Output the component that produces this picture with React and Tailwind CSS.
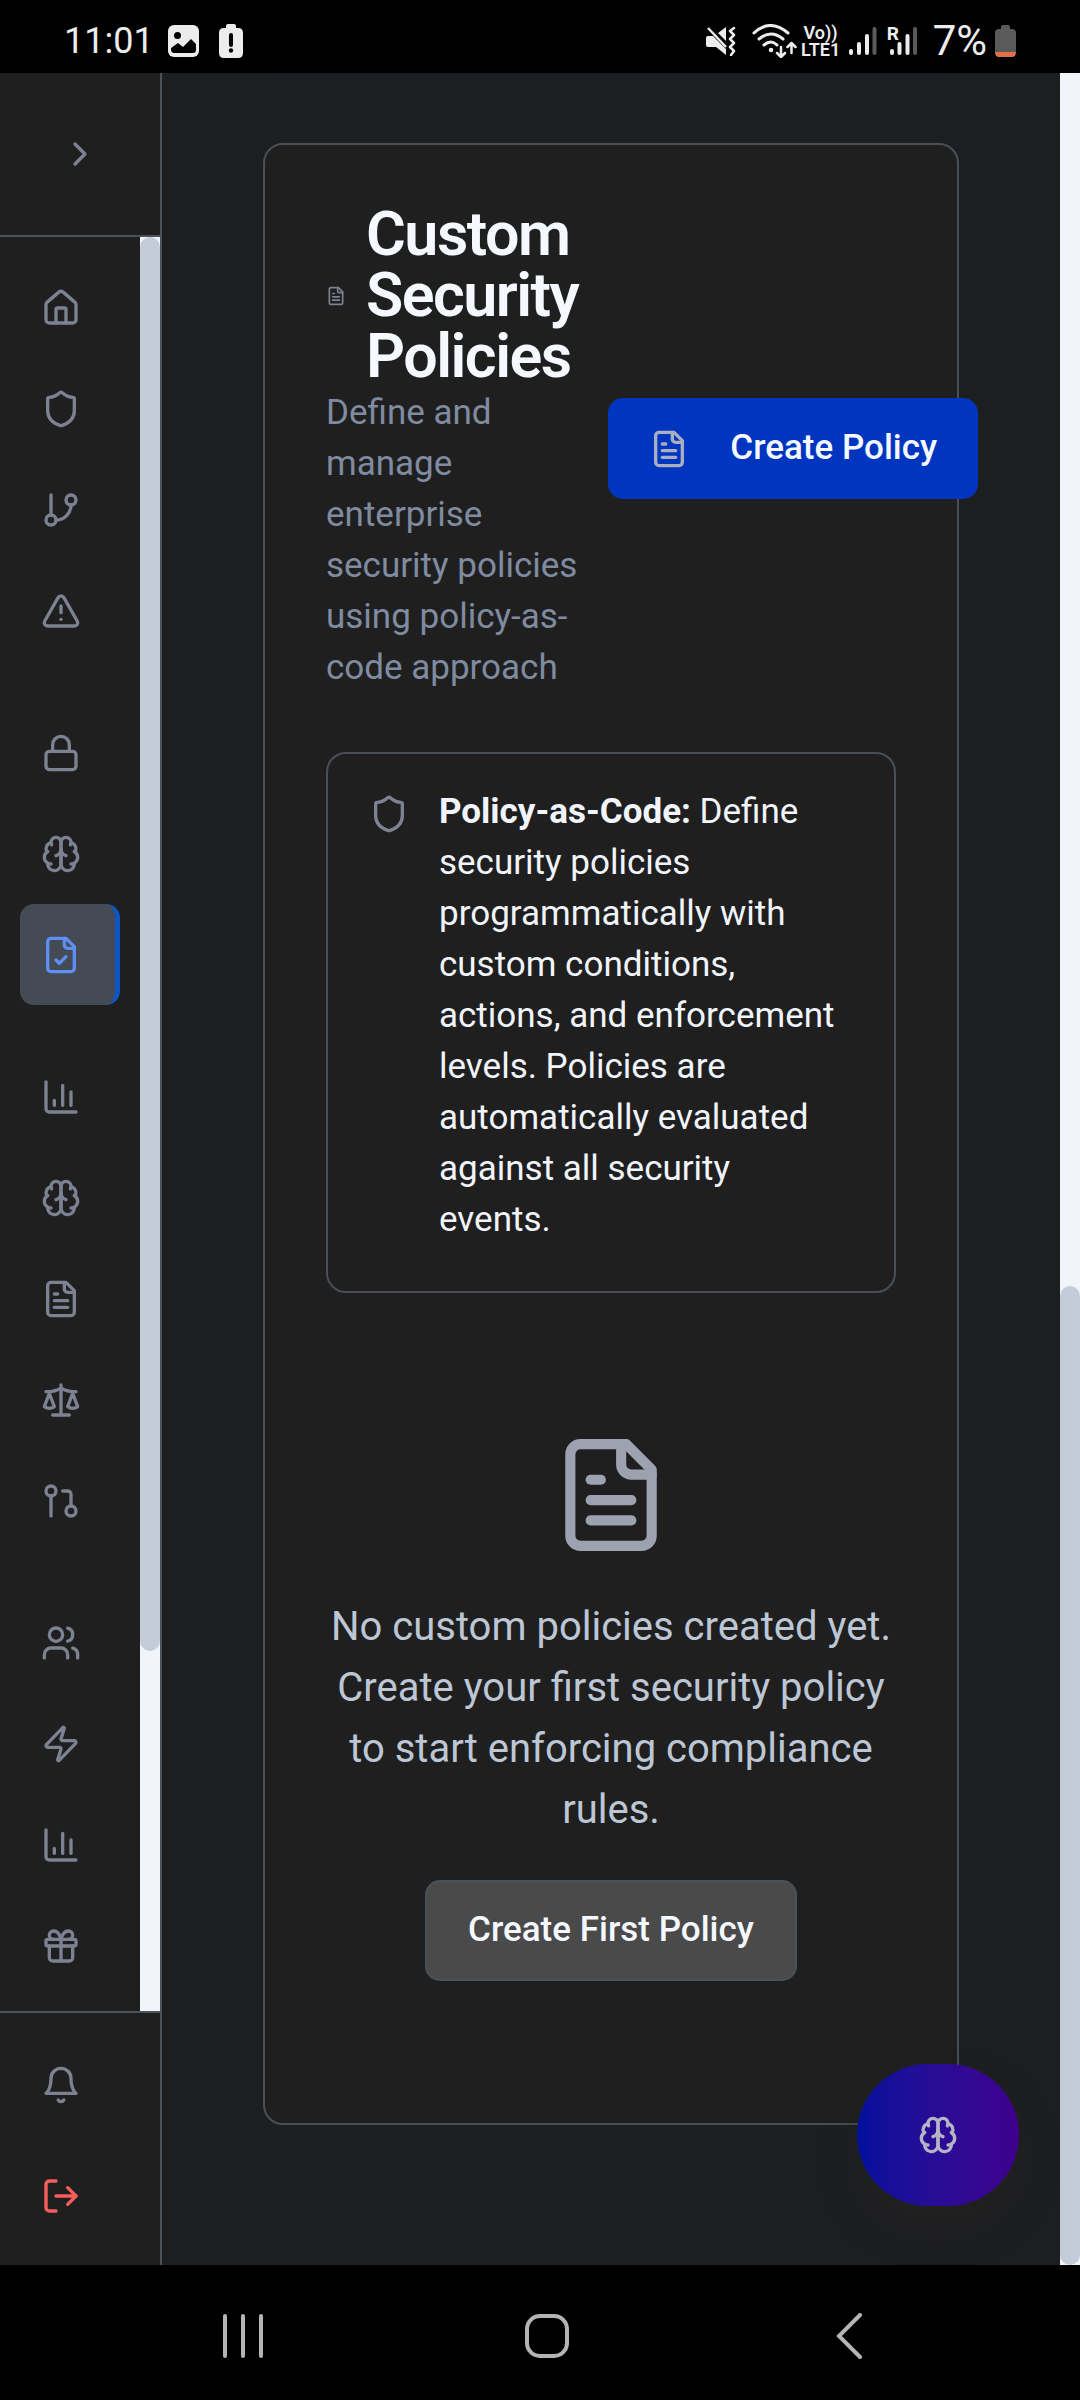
import React from "react";

const glyphs = {
  chevron: <path d="m9 18 6-6-6-6" />,
  home: (
    <>
      <path d="M15 21v-8a1 1 0 0 0-1-1h-4a1 1 0 0 0-1 1v8" />
      <path d="M3 10a2 2 0 0 1 .709-1.528l7-5.999a2 2 0 0 1 2.582 0l7 5.999A2 2 0 0 1 21 10v9a2 2 0 0 1-2 2H5a2 2 0 0 1-2-2z" />
    </>
  ),
  shield: (
    <path d="M20 13c0 5-3.5 7.5-7.66 8.95a1 1 0 0 1-.67-.01C7.5 20.5 4 18 4 13V6a1 1 0 0 1 1-1c2 0 4.5-1.2 6.24-2.72a1.17 1.17 0 0 1 1.52 0C14.51 3.81 17 5 19 5a1 1 0 0 1 1 1z" />
  ),
  branch: (
    <>
      <path d="M6 3v12" />
      <circle cx="18" cy="6" r="3" />
      <circle cx="6" cy="18" r="3" />
      <path d="M18 9a9 9 0 0 1-9 9" />
    </>
  ),
  alert: (
    <>
      <path d="m21.73 18-8-14a2 2 0 0 0-3.48 0l-8 14A2 2 0 0 0 4 21h16a2 2 0 0 0 1.73-3" />
      <path d="M12 9v4" />
      <path d="M12 17h.01" />
    </>
  ),
  lock: (
    <>
      <rect width="18" height="11" x="3" y="11" rx="2" />
      <path d="M7 11V7a5 5 0 0 1 10 0v4" />
    </>
  ),
  brain: (
    <>
      <path d="M12 5a3 3 0 1 0-5.997.125 4 4 0 0 0-2.526 5.77 4 4 0 0 0 .556 6.588A4 4 0 1 0 12 18Z" />
      <path d="M12 5a3 3 0 1 1 5.997.125 4 4 0 0 1 2.526 5.77 4 4 0 0 1-.556 6.588A4 4 0 1 1 12 18Z" />
      <path d="M15 13a4.5 4.5 0 0 1-3-4 4.5 4.5 0 0 1-3 4" />
      <path d="M17.599 6.5a3 3 0 0 0 .399-1.375" />
      <path d="M6.003 5.125A3 3 0 0 0 6.401 6.5" />
      <path d="M3.477 10.896a4 4 0 0 1 .585-.396" />
      <path d="M19.938 10.5a4 4 0 0 1 .585.396" />
      <path d="M6 18a4 4 0 0 1-1.967-.516" />
      <path d="M19.967 17.484A4 4 0 0 1 18 18" />
    </>
  ),
  fileCheck: (
    <>
      <path d="M15 2H6a2 2 0 0 0-2 2v16a2 2 0 0 0 2 2h12a2 2 0 0 0 2-2V7Z" />
      <path d="M14 2v4a2 2 0 0 0 2 2h4" />
      <path d="m9 15 2 2 4-4" />
    </>
  ),
  fileText: (
    <>
      <path d="M15 2H6a2 2 0 0 0-2 2v16a2 2 0 0 0 2 2h12a2 2 0 0 0 2-2V7Z" />
      <path d="M14 2v4a2 2 0 0 0 2 2h4" />
      <path d="M10 9H8" />
      <path d="M16 13H8" />
      <path d="M16 17H8" />
    </>
  ),
  chart: (
    <>
      <path d="M3 3v16a2 2 0 0 0 2 2h16" />
      <path d="M18 17V9" />
      <path d="M13 17V5" />
      <path d="M8 17v-3" />
    </>
  ),
  scale: (
    <>
      <path d="m16 16 3-8 3 8c-.87.65-1.92 1-3 1s-2.13-.35-3-1Z" />
      <path d="m2 16 3-8 3 8c-.87.65-1.92 1-3 1s-2.13-.35-3-1Z" />
      <path d="M7 21h10" />
      <path d="M12 3v18" />
      <path d="M3 7h2c2 0 5-1 7-2 2 1 5 2 7 2h2" />
    </>
  ),
  pullRequest: (
    <>
      <circle cx="18" cy="18" r="3" />
      <circle cx="6" cy="6" r="3" />
      <path d="M13 6h3a2 2 0 0 1 2 2v7" />
      <path d="M6 9v12" />
    </>
  ),
  users: (
    <>
      <path d="M16 21v-2a4 4 0 0 0-4-4H6a4 4 0 0 0-4 4v2" />
      <circle cx="9" cy="7" r="4" />
      <path d="M22 21v-2a4 4 0 0 0-3-3.87" />
      <path d="M16 3.13a4 4 0 0 1 0 7.75" />
    </>
  ),
  zap: (
    <path d="M4 14a1 1 0 0 1-.78-1.63l9.9-10.2a.5.5 0 0 1 .86.46l-1.92 6.02A1 1 0 0 0 13 10h7a1 1 0 0 1 .78 1.63l-9.9 10.2a.5.5 0 0 1-.86-.46l1.92-6.02A1 1 0 0 0 11 14z" />
  ),
  gift: (
    <>
      <rect x="3" y="8" width="18" height="4" rx="1" />
      <path d="M12 8v13" />
      <path d="M19 12v7a2 2 0 0 1-2 2H7a2 2 0 0 1-2-2v-7" />
      <path d="M7.5 8a2.5 2.5 0 0 1 0-5A4.8 8 0 0 1 12 8a4.8 8 0 0 1 4.5-5 2.5 2.5 0 0 1 0 5" />
    </>
  ),
  bell: (
    <>
      <path d="M6 8a6 6 0 0 1 12 0c0 7 3 9 3 9H3s3-2 3-9" />
      <path d="M10.3 21a1.94 1.94 0 0 0 3.4 0" />
    </>
  ),
  logout: (
    <>
      <path d="M9 21H5a2 2 0 0 1-2-2V5a2 2 0 0 1 2-2h4" />
      <path d="m16 17 5-5-5-5" />
      <path d="M21 12H9" />
    </>
  ),
};

function Icon({ name, className = "size-10" }) {
  return (
    <svg
      viewBox="0 0 24 24"
      fill="none"
      stroke="currentColor"
      strokeWidth="2"
      strokeLinecap="round"
      strokeLinejoin="round"
      aria-hidden="true"
      className={`shrink-0 ${className}`}
    >
      {glyphs[name]}
    </svg>
  );
}

const navGroups = [
  [
    ["home", "Dashboard"],
    ["shield", "Security"],
    ["branch", "Repositories"],
    ["alert", "Alerts"],
  ],
  [
    ["lock", "Secrets"],
    ["brain", "AI Analysis"],
    ["fileCheck", "Policies"],
  ],
  [
    ["chart", "Analytics"],
    ["brain", "AI Insights"],
    ["fileText", "Reports"],
    ["scale", "Compliance"],
    ["pullRequest", "Pull Requests"],
  ],
  [
    ["users", "Team"],
    ["zap", "Integrations"],
    ["chart", "Usage"],
    ["gift", "Rewards"],
  ],
];

function StatusBar() {
  return (
    <header className="flex h-[73px] items-center justify-between bg-black px-16 pt-2 text-[#ececec]">
      <div className="flex items-center">
        <time className="mr-3.5 text-[36px] leading-10">11:01</time>
        <svg viewBox="0 0 31 32" className="mr-5 h-8 w-[31px]" aria-hidden="true">
          <rect width="31" height="32" rx="6" fill="currentColor" />
          <circle cx="9.500" cy="10.500" r="3.500" fill="#000" />
          <path d="M3 24v-1l7-5 5 4 8-8 5 5v6q0 3-3 3H6q-3 0-3-4z" fill="#000" />
        </svg>
        <svg viewBox="0 0 24 34" className="h-[34px] w-6" aria-hidden="true">
          <path
            d="M7 4V2q0-2 2-2h6q2 0 2 2v2h2q5 0 5 5v20q0 5-5 5H5q-5 0-5-5V9q0-5 5-5z"
            fill="currentColor"
          />
          <path d="M12 11v10" stroke="#000" strokeWidth="4" strokeLinecap="round" />
          <circle cx="12" cy="26.500" r="2.200" fill="#000" />
        </svg>
      </div>
      <div className="flex items-center">
        <svg viewBox="0 0 30 30" className="mr-4 size-[30px]" fill="none" aria-hidden="true">
          <path d="M0 12q0-2 2-2h5l13 13v6L10 21H2q-2 0-2-2zM12 7l8-6v14z" fill="currentColor" />
          <path d="M2 2l18 19" stroke="currentColor" strokeWidth="2.500" />
          <path
            d="M28 2l-4 3 4 4-4 4 4 4-4 4 4 4-3 4"
            stroke="currentColor"
            strokeWidth="2.500"
            strokeLinecap="round"
            strokeLinejoin="round"
          />
        </svg>
        <svg
          viewBox="0 0 45 34"
          className="mr-1 h-[34px] w-[45px]"
          fill="none"
          stroke="currentColor"
          strokeWidth="3"
          strokeLinecap="round"
          strokeLinejoin="round"
          aria-hidden="true"
        >
          <path d="M2 9Q18-6 36 9M7 15q12-10 24 0M12 21q7-6 13 0" />
          <circle cx="19" cy="26" r="1.500" fill="currentColor" strokeWidth="1.500" />
          <path d="M29 23v10m-4-4l4 4 4-4M39.500 29V19m-4 4l4-4 4 4" strokeWidth="2.500" />
        </svg>
        <div className="mr-2 w-10 text-center text-[18px] leading-[17px] font-semibold">
          <div>Vo))</div>
          <div>LTE1</div>
        </div>
        <svg viewBox="0 0 28 30" className="mr-2.5 h-[30px] w-7" strokeWidth="4" strokeLinecap="round" aria-hidden="true">
          <path d="M2 25v2M10 18v9M18 10v17" stroke="currentColor" />
          <path d="M25.500 3v24" stroke="#5a5a5a" />
        </svg>
        <div className="relative mr-4 h-[30px] w-[30px]">
          <svg viewBox="0 0 30 30" className="size-[30px]" strokeWidth="4" strokeLinecap="round" aria-hidden="true">
            <path d="M5 25v2M12.500 18v9M20.500 10v17" stroke="currentColor" />
            <path d="M28 3v24" stroke="#5a5a5a" />
          </svg>
          <span className="absolute top-0 left-0 text-[19px] leading-[16px] font-bold">R</span>
        </div>
        <span className="mr-2 text-[42px] leading-10">7%</span>
        <svg viewBox="0 0 21 32" className="h-8 w-[21px]" aria-hidden="true">
          <path d="M6 4V2q0-2 2-2h5q2 0 2 2v2h2q4 0 4 4v19H0V8q0-4 4-4z" fill="#5a5a5a" />
          <path d="M0 27h21q0 5-4 5H4q-4 0-4-5z" fill="#e07048" />
        </svg>
      </div>
    </header>
  );
}

function Sidebar() {
  return (
    <aside className="flex w-[162px] shrink-0 flex-col border-r-2 border-[#4b5259] bg-[#1f1f1f] text-[#7c8291]">
      <div className="flex h-[164px] items-center justify-center border-b-2 border-[#4b5259]">
        <button aria-label="Expand sidebar">
          <Icon name="chevron" />
        </button>
      </div>
      <div className="flex flex-1">
        <nav className="flex flex-1 flex-col gap-[41px] px-5 pt-5 pb-3">
          {navGroups.map((group, i) => (
            <div key={i} className="flex flex-col">
              {group.map(([icon, label]) => (
                <a
                  key={label}
                  href="#"
                  aria-label={label}
                  className={
                    icon === "fileCheck"
                      ? "flex h-[101px] items-center rounded-[14px] border-r-[5px] border-[#0f55c8] bg-[#454b55] pl-[21px] text-[#5e8ff5]"
                      : "flex h-[101px] items-center pl-[21px]"
                  }
                >
                  <Icon name={icon} />
                </a>
              ))}
            </div>
          ))}
        </nav>
        <div className="flex w-5 flex-col bg-[#f1f5f9]">
          <div className="grow-[1414] rounded-full bg-[#c3ccd8]" />
          <div className="grow-[360]" />
        </div>
      </div>
      <div className="flex flex-col border-t-2 border-[#4b5259] px-5 pt-4 pb-[14px]">
        <button aria-label="Notifications" className="flex h-[111px] items-center pl-[21px]">
          <Icon name="bell" />
        </button>
        <button aria-label="Log out" className="flex h-[111px] items-center pl-[21px] text-[#f75f5c]">
          <Icon name="logout" />
        </button>
      </div>
    </aside>
  );
}

function PolicyCard() {
  return (
    <section className="rounded-[20px] border-2 border-[#4a4f56] bg-[#1f1f1f] px-[61px] pt-[59px] pb-[61px]">
      <div className="flex items-center gap-[30px]">
        <div className="min-w-min flex-1">
          <div className="flex items-center gap-5">
            <Icon name="fileText" className="size-5 text-[#7c8291]" />
            <h1 className="text-[61px] leading-[61px] font-semibold tracking-tight text-[#f5f9ff]">
              Custom Security Policies
            </h1>
          </div>
          <p className="text-[35px] leading-[51px] text-[#7f8ba0]">
            Define and manage enterprise security policies using policy-as-code approach
          </p>
        </div>
        <button className="flex h-[101px] shrink-0 items-center gap-[41px] rounded-[15px] bg-[#0036bf] px-[41px] text-[35px] font-medium whitespace-nowrap text-[#f5f9ff]">
          <Icon name="fileText" className="size-10 text-[#a9afc0]" />
          Create Policy
        </button>
      </div>

      <div className="mt-[59px] flex gap-[30px] rounded-[20px] border-2 border-[#4a4f56] pt-8 pr-[50px] pb-[46px] pl-[41px]">
        <Icon name="shield" className="mt-2 size-10 text-[#7c8291]" />
        <p className="text-[35px] leading-[51px] text-[#f1f5fb]">
          <strong className="font-bold">Policy-as-Code:</strong> Define security policies
          programmatically with custom conditions, actions, and enforcement levels. Policies are
          automatically evaluated against all security events.
        </p>
      </div>

      <div className="flex flex-col items-center pt-[141px] pb-[81px]">
        <Icon name="fileText" className="size-[122px] text-[#9ca2b0]" />
        <p className="mt-10 text-center text-[40px] leading-[61px] text-[#bcc6d5]">
          No custom policies created yet. Create your first security policy to start enforcing
          compliance rules.
        </p>
        <button className="mt-10 h-[101px] rounded-[15px] border-2 border-[#4b5159] bg-[#4a4a4a] px-[41px] text-[35px] font-medium text-[#f5f9ff]">
          Create First Policy
        </button>
      </div>
    </section>
  );
}

export default function App() {
  return (
    <div className="flex min-h-screen flex-col bg-black font-[Roboto,sans-serif]">
      <StatusBar />
      <div className="flex flex-1">
        <Sidebar />
        <main className="relative min-w-0 flex-1 bg-[#1d1e20] px-[101px] pb-[138px]">
          <div className="mb-[62px] h-2 rounded-b-[20px] bg-[#1b1e23]" />
          <PolicyCard />
          <button
            aria-label="Open AI assistant"
            className="absolute right-[41px] bottom-[59px] flex h-[142px] w-[162px] items-center justify-center rounded-full bg-linear-to-r from-[#00109c] to-[#3f008e] text-[#b5b4c4] shadow-[0_22px_34px_rgba(34,34,34,0.8)]"
          >
            <Icon name="brain" />
          </button>
        </main>
        <div className="flex w-5 flex-col bg-[#f1f5f9]">
          <div className="grow-[1213]" />
          <div className="grow-[979] rounded-full bg-[#c3ccd8]" />
        </div>
      </div>
      <footer className="flex h-[135px] items-center justify-between bg-black pt-1.5 pr-[218px] pl-[221px] text-[#b4b4b4]">
        <button aria-label="Recent apps">
          <svg viewBox="0 0 44 44" className="size-11" stroke="currentColor" strokeWidth="4" strokeLinecap="round">
            <path d="M4 2v40M22 2v40M40 2v40" />
          </svg>
        </button>
        <button aria-label="Home">
          <svg viewBox="0 0 44 44" className="size-11" fill="none" stroke="currentColor" strokeWidth="4">
            <rect x="2" y="2" width="40" height="40" rx="13" />
          </svg>
        </button>
        <button aria-label="Back">
          <svg
            viewBox="0 0 34 46"
            className="h-[46px] w-[34px]"
            fill="none"
            stroke="currentColor"
            strokeWidth="4"
            strokeLinecap="round"
          >
            <path d="M32 2L11 23l21 21" />
          </svg>
        </button>
      </footer>
    </div>
  );
}
